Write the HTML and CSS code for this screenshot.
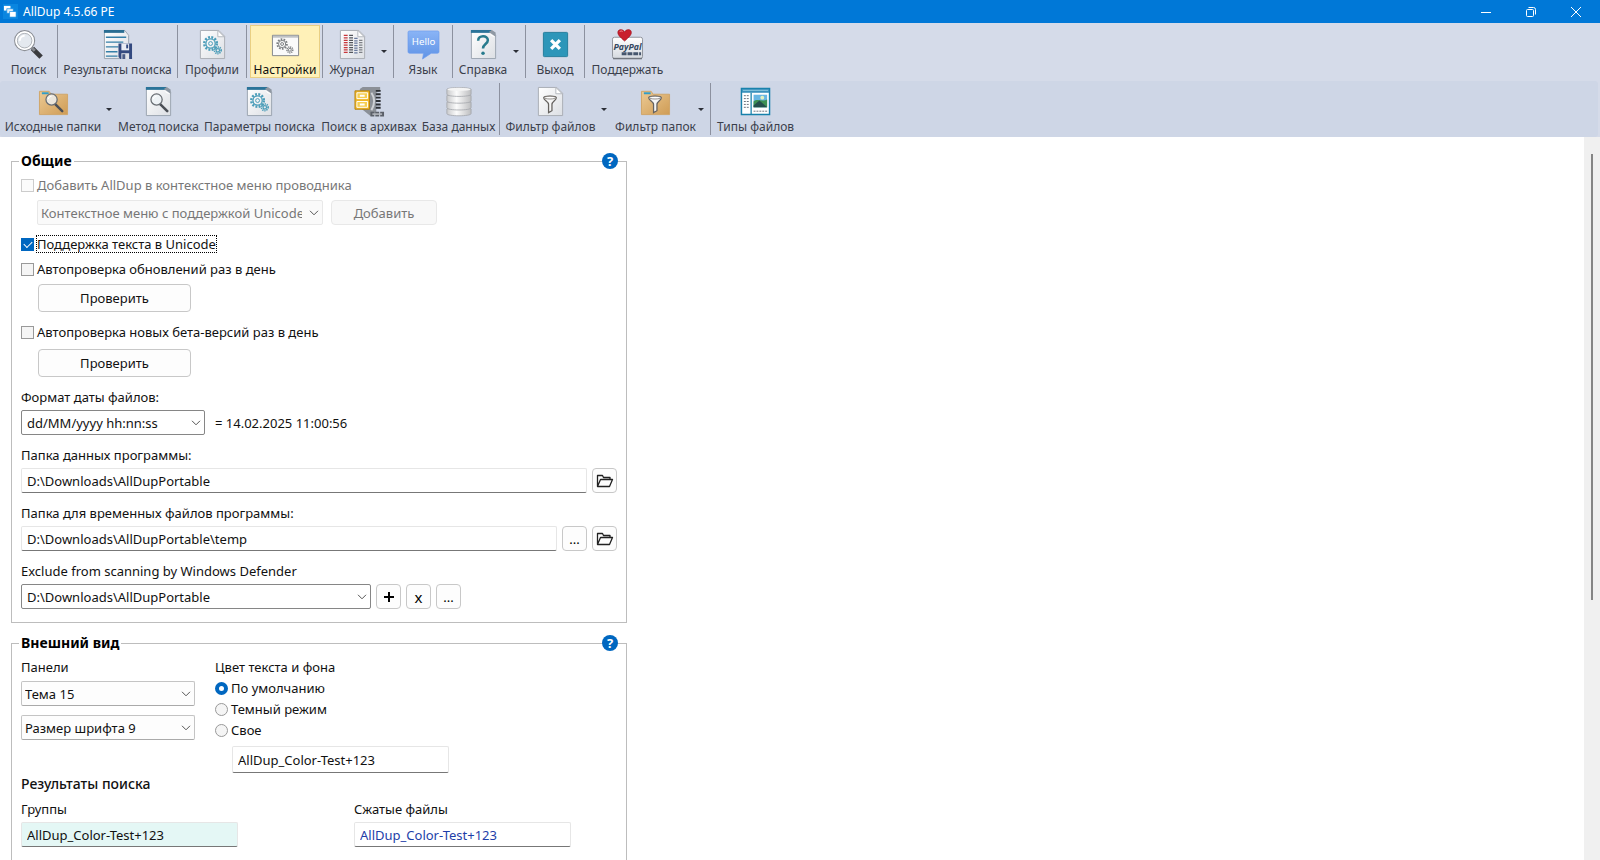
FILE: index.html
```html
<!DOCTYPE html>
<html lang="ru">
<head>
<meta charset="utf-8">
<title>AllDup 4.5.66 PE</title>
<link rel="stylesheet" href="styles.css">
</head>
<body>
<svg class="defs" aria-hidden="true">
  <defs>
    <linearGradient id="paper" x1="0" y1="0" x2="1" y2="1"><stop offset="0" stop-color="#ffffff"/><stop offset="1" stop-color="#dcdfe4"/></linearGradient>
    <linearGradient id="tan" x1="0" y1="0" x2="1" y2="1"><stop offset="0" stop-color="#ecca94"/><stop offset="1" stop-color="#cf9c55"/></linearGradient>
    <linearGradient id="bubble" x1="0" y1="0" x2="0" y2="1"><stop offset="0" stop-color="#8ab4f6"/><stop offset="1" stop-color="#5f93e6"/></linearGradient>
    <linearGradient id="disk" x1="0" y1="0" x2="1" y2="0"><stop offset="0" stop-color="#c9cacc"/><stop offset=".4" stop-color="#fbfbfb"/><stop offset="1" stop-color="#bdbec0"/></linearGradient>
    <linearGradient id="card" x1="0" y1="0" x2="0" y2="1"><stop offset="0" stop-color="#ffffff"/><stop offset="1" stop-color="#d5d9df"/></linearGradient>
    <symbol id="page" viewBox="0 0 32 32"><path d="M3.500 1.500h19l6 6v23h-25z" fill="url(#paper)" stroke="#a9adb5"/><path d="M21.500 1.500v6.500h6.500z" fill="#fff" stroke="#b4b8be"/></symbol>
    <symbol id="bluepage" viewBox="0 0 32 32"><path d="M3.500 1.500h21l4 5v24h-25z" fill="url(#paper)" stroke="#9ba4b0"/><path d="M3 1h21v3H3z" fill="#2a7399"/><path d="M21.500 3l7 5v-4.500l-4-2.500z" fill="#8f98a3"/><path d="M20 4c3 0 3 4 8 4l-7-4z" fill="#fff"/></symbol>
    <symbol id="gears" viewBox="0 0 32 32"><g fill="none"><circle cx="14" cy="15" r="6.500" stroke-width="2.500" stroke-dasharray="2 1.400"/><circle cx="14" cy="15" r="4.800" stroke-width="1.300"/><circle cx="14" cy="15" r="2" stroke-width="1"/><circle cx="21.500" cy="22" r="3.400" stroke-width="1.800" stroke-dasharray="1.300 .9"/><circle cx="21.500" cy="22" r="1.800" stroke-width="1.200"/></g></symbol>
    <symbol id="lens" viewBox="0 0 32 32"><path d="M18 19l7 7" stroke="#4b4f56" stroke-width="2.600" stroke-linecap="round"/><circle cx="14" cy="14" r="5.800" fill="#eef3f6" fill-opacity=".8" stroke="#676c72" stroke-width="1.300"/><path d="M10.500 13.500a4 4 0 0 1 3.500-3" stroke="#fff" fill="none"/></symbol>
    <symbol id="folder" viewBox="0 0 32 32"><path d="M1.500 5.500h10l2 3h17v21h-29z" fill="url(#tan)" stroke="#d0a568"/><path d="M4 6.500h7v2H4z" fill="#319dc8"/></symbol>
    <symbol id="funnel" viewBox="0 0 32 32"><path d="M9 12c0-2 13-2 13 0 0 3-4.500 4-4.500 7v6.500l-3.500 2V19c0-3-5-4-5-7z" fill="#f5f5f5" stroke="#65625f" stroke-width="1.300"/><ellipse cx="15.500" cy="12" rx="6" ry="1.400" fill="#fff" stroke="#77736f" stroke-width=".8"/></symbol>
    <symbol id="openfolder" viewBox="0 0 18 16"><path d="M1.500 13.500v-11h5l1 2h6.500v2M1.500 13.500l3-7h12l-3 7z" fill="none" stroke="#222" stroke-width="1.300" stroke-linejoin="round"/></symbol>
    <symbol id="chevron" viewBox="0 0 10 6"><path d="M1 .8l4 4 4-4" fill="none" stroke="currentColor" stroke-width="1"/></symbol>
  </defs>
</svg>

<header class="titlebar">
  <svg class="app-icon" viewBox="0 0 16 16"><path d="M0 0h16v16H0z" fill="#0a86e0"/><path d="M1 2h7v5H1z" fill="#fff"/><path d="M4 5h7v5H4z" fill="#dff0fc" stroke="#0a86e0" stroke-width=".7"/><path d="M7 8h7v6H7z" fill="#fff" stroke="#0a86e0" stroke-width=".7"/></svg>
  <h1 class="app-title">AllDup 4.5.66 PE</h1>
  <div class="window-buttons">
    <button class="window-button" aria-label="Свернуть"><svg viewBox="0 0 12 12"><path d="M1 6.500h10"/></svg></button>
    <button class="window-button" aria-label="Восстановить"><svg viewBox="0 0 12 12"><rect x="1.500" y="3.500" width="7" height="7" rx="1"/><path d="M3.500 1.500h5a2 2 0 0 1 2 2v5"/></svg></button>
    <button class="window-button" aria-label="Закрыть"><svg viewBox="0 0 12 12"><path d="M1 1l10 10M11 1L1 11"/></svg></button>
  </div>
</header>

<nav class="toolbars">
  <div class="toolbar">
    <div class="slot slot-search"><button class="tool"><svg viewBox="0 0 32 32"><path d="M20 20l9 9" stroke="#3a3b3e" stroke-width="5"/><path d="M18.500 18.500l4 4" stroke="#85888e" stroke-width="3"/><circle cx="12" cy="12" r="10.300" fill="#f1f4f8" stroke="#8d9096" stroke-width="1.200"/><circle cx="12" cy="12" r="8.800" fill="none" stroke="#fff" stroke-width="1.600"/><circle cx="12" cy="12" r="7.500" fill="#e4e9ef" stroke="#a0a4aa" stroke-width=".8"/><path d="M7 12a5 5 0 0 1 5-5" stroke="#fff" stroke-width="2" fill="none"/></svg><span>Поиск</span></button></div>
    <div class="slot slot-results"><button class="tool"><svg viewBox="0 0 32 32"><path d="M2.500 1.500h21l4 5v24h-25z" fill="url(#paper)" stroke="#9ba4b0"/><path d="M2 1h21v3H2z" fill="#2a6d92"/><path d="M4 8.500h21M4 13.500h18M4 18.500h13M4 23.500h12M4 28h12" stroke="#357fa8" stroke-width="1.400"/><path d="M17 15h14v16H19l-2-2z" fill="#33497f"/><path d="M20 15h8v7h-8z" fill="#e9edf4"/><path d="M25 16h2v4h-2z" fill="#33497f"/><path d="M20 25h8v6h-8z" fill="#dfe2e8"/><path d="M21 26h3v5h-3z" fill="#495b86"/></svg><span>Результаты поиска</span></button></div>
    <div class="slot slot-profiles"><button class="tool"><svg viewBox="0 0 32 32"><use href="#page"/><use href="#gears" stroke="#4b9db9"/></svg><span>Профили</span></button></div>
    <div class="slot slot-settings"><button class="tool tool-active" aria-pressed="true"><svg viewBox="0 0 32 32"><path d="M2.500 6.500h27v21h-27z" fill="#fafafa" stroke="#82868b"/><path d="M3 7h26v2H3z" fill="#bfc2c5"/><g fill="none" stroke="#7c7f82"><circle cx="12.500" cy="15.500" r="4.900" stroke-width="2" stroke-dasharray="1.700 1.300"/><circle cx="12.500" cy="15.500" r="3.700"/><circle cx="12.500" cy="15.500" r="1.500"/><circle cx="20.500" cy="21.500" r="3" stroke-width="1.600" stroke-dasharray="1.200 .8"/><circle cx="20.500" cy="21.500" r="1.500"/></g></svg><span>Настройки</span></button></div>
    <div class="slot slot-log"><button class="tool"><svg viewBox="0 0 32 32"><use href="#page"/><g fill="none" stroke-width="1.300"><path d="M9 6v20" stroke="#c8373b" stroke-width="4" stroke-dasharray="1.300 1.200"/><path d="M14.500 6v20" stroke="#53565c" stroke-width="4" stroke-dasharray="1.300 1.200"/><path d="M19.500 9v17" stroke="#69799c" stroke-width="3.500" stroke-dasharray="1.300 1.200"/><path d="M24.500 11v15" stroke="#7d8086" stroke-width="3.500" stroke-dasharray="1.300 1.200"/></g></svg><span>Журнал</span></button><button class="drop" aria-label="Журнал: меню"></button></div>
    <div class="slot slot-language"><button class="tool"><svg viewBox="0 0 32 32"><path d="M1.500 2h29q1.500 0 1.500 1.500v20q0 1.500-1.500 1.500H24l-9 6 1-6H1.500Q0 25 0 23.500v-20Q0 2 1.500 2z" fill="url(#bubble)" stroke="#6c9ced" stroke-width=".7"/><text x="16" y="16" class="hello">Hello</text></svg><span>Язык</span></button></div>
    <div class="slot slot-help"><button class="tool"><svg viewBox="0 0 32 32"><use href="#bluepage"/><path d="M10.500 12c0-6 10-6 10-.5 0 4-5 4-5 8.500" fill="none" stroke="#287b8d" stroke-width="2.600"/><circle cx="15.500" cy="25" r="1.800" fill="#287b8d"/></svg><span>Справка</span></button><button class="drop" aria-label="Справка: меню"></button></div>
    <div class="slot slot-exit"><button class="tool"><svg viewBox="0 0 32 32"><rect x="3.500" y="3.500" width="25" height="25" rx="1" fill="#2d96b9" stroke="#237d9b"/><path d="M11.500 11.500l9 9M20.500 11.500l-9 9" stroke="#fff" stroke-width="3.400"/></svg><span>Выход</span></button></div>
    <div class="slot slot-donate"><button class="tool"><svg viewBox="0 0 32 32"><rect x=".5" y="8.500" width="31" height="22" rx="2" fill="url(#card)" stroke="#8f949c"/><path d="M1 30.500h30" stroke="#72777f" stroke-width="1.500"/><path d="M10 25.500h20" stroke="#46566d" stroke-width="3" stroke-dasharray="5 1"/><text x="16" y="22" class="paypal">PayPal</text><path d="M13 12.500C8 8 6 6 6 3.500 6 0 11-.5 13 3c2-3.500 7-3 7 .5 0 2.500-2 4.500-7 9z" fill="#c91f2d" stroke="#98131e" stroke-width=".6"/><path d="M8 3c.5-1.200 2-1.200 3-.5" stroke="#f08a8f" fill="none"/></svg><span>Поддержать</span></button></div>
  </div>
  <div class="toolbar toolbar-second">
    <div class="slot slot-source"><button class="tool"><svg viewBox="0 0 32 32"><use href="#folder"/><use href="#lens"/></svg><span>Исходные папки</span></button><button class="drop" aria-label="Исходные папки: меню"></button></div>
    <div class="slot slot-method"><button class="tool"><svg viewBox="0 0 32 32"><use href="#bluepage"/><use href="#lens"/></svg><span>Метод поиска</span></button></div>
    <div class="slot slot-params"><button class="tool"><svg viewBox="0 0 32 32"><use href="#bluepage"/><use href="#gears" stroke="#4b9db9"/></svg><span>Параметры поиска</span></button></div>
    <div class="slot slot-archives"><button class="tool"><svg viewBox="0 0 32 32"><path d="M6 3l3-2h18v4l-4 2v22l-6 2-10-8z" fill="#8b9097"/><path d="M1 5h15v19H1z" fill="#efb728" stroke="#b8830f"/><path d="M3 7h11v6H3zM3 16h11v6H3z" fill="#f6ce4f" stroke="#fff"/><path d="M6 10h5M6 19h5" stroke="#fff" stroke-width="2"/><path d="M25 4v21" stroke="#2d3136" stroke-width="5" stroke-dasharray="2 1.500"/><path d="M18 7c4 6 4 11 0 18" fill="none" stroke="#ced1d5" stroke-width="2"/><path d="M17 29h14" stroke="#5b6069" stroke-width="5" stroke-dasharray="4 1"/><path d="M19 29h10" stroke="#b9bdc3" stroke-width="1.500"/></svg><span>Поиск в архивах</span></button></div>
    <div class="slot slot-database"><button class="tool"><svg viewBox="0 0 32 32"><g fill="url(#disk)" stroke="#a2a5a9" stroke-width=".8"><path d="M4 24c0-2 25-2 25 0v4.500c0 3-25 3-25 0z"/><path d="M4 17c0-2 25-2 25 0v5.500c0 3-25 3-25 0z"/><path d="M4 10c0-2 25-2 25 0v5.500c0 3-25 3-25 0z"/><path d="M4 3.500C4 1 29 1 29 3.500v5c0 3-25 3-25 0z"/></g><ellipse cx="16.500" cy="3.500" rx="12" ry="1.600" fill="#f4f4f4"/></svg><span>База данных</span></button></div>
    <div class="slot slot-filefilter"><button class="tool"><svg viewBox="0 0 32 32"><use href="#page"/><use href="#funnel"/></svg><span>Фильтр файлов</span></button><button class="drop" aria-label="Фильтр файлов: меню"></button></div>
    <div class="slot slot-folderfilter"><button class="tool"><svg viewBox="0 0 32 32"><use href="#folder"/><use href="#funnel"/></svg><span>Фильтр папок</span></button><button class="drop" aria-label="Фильтр папок: меню"></button></div>
    <div class="slot slot-types"><button class="tool"><svg viewBox="0 0 32 32"><path d="M1.500 2.500h29v27h-29z" fill="#fff" stroke="#1781ab" stroke-width="1.500"/><path d="M2 3h28v4H2z" fill="#3b91bc"/><path d="M3 4.500h26" stroke="#8cc8df"/><path d="M11.500 7v22" stroke="#1781ab" stroke-width="1.300"/><path d="M4 10h6M4 13h6M4 16h6M4 19h6M4 22h6M14 26h14" stroke="#68707a" stroke-dasharray="2 1"/><path d="M14 9h14v13H14z" fill="#68b7e3"/><path d="M14 16c4-4 9 1 14-2v8H14z" fill="#3d9153"/><path d="M14 20l6-5 8 7H14z" fill="#234f4c"/><circle cx="23" cy="12" r="2" fill="#e3f0c0"/></svg><span>Типы файлов</span></button></div>
  </div>
</nav>

<div class="workspace">
  <main class="settings">
    <fieldset class="group">
      <legend>Общие</legend>
      <button class="help" aria-label="Справка: общие">?</button>
      <div class="check-row muted"><input type="checkbox" id="ctx" disabled><label for="ctx">Добавить AllDup в контекстное меню проводника</label></div>
      <div class="context-row">
        <div class="combo combo-muted combo-context"><select disabled aria-label="Контекстное меню"><option>Контекстное меню с поддержкой Unicode</option></select><svg><use href="#chevron"/></svg></div>
        <button class="button button-add" disabled>Добавить</button>
      </div>
      <div class="check-row"><input type="checkbox" id="uni" checked><label for="uni" class="focused">Поддержка текста в Unicode</label></div>
      <div class="check-row check-update"><input type="checkbox" id="upd"><label for="upd">Автопроверка обновлений раз в день</label></div>
      <button class="button button-check">Проверить</button>
      <div class="check-row check-beta"><input type="checkbox" id="beta"><label for="beta">Автопроверка новых бета-версий раз в день</label></div>
      <button class="button button-check">Проверить</button>

      <label class="caption caption-date" for="date">Формат даты файлов:</label>
      <div class="row">
        <div class="combo combo-strong combo-date"><select id="date"><option>dd/MM/yyyy hh:nn:ss</option></select><svg><use href="#chevron"/></svg></div>
        <output class="date-sample" for="date">= 14.02.2025 11:00:56</output>
      </div>
      <label class="caption" for="data">Папка данных программы:</label>
      <div class="row"><input class="text" id="data" value="D:\Downloads\AllDupPortable"><button class="button square" aria-label="Открыть папку"><svg><use href="#openfolder"/></svg></button></div>
      <label class="caption" for="temp">Папка для временных файлов программы:</label>
      <div class="row"><input class="text" id="temp" value="D:\Downloads\AllDupPortable\temp"><button class="button square">...</button><button class="button square" aria-label="Открыть папку"><svg><use href="#openfolder"/></svg></button></div>
      <label class="caption" for="excl">Exclude from scanning by Windows Defender</label>
      <div class="row">
        <div class="combo combo-strong combo-exclude"><select id="excl"><option>D:\Downloads\AllDupPortable</option></select><svg><use href="#chevron"/></svg></div>
        <button class="button square" aria-label="Добавить"><svg viewBox="0 0 18 16"><path d="M9 3v10M4 8h10" stroke="#000" stroke-width="2"/></svg></button><button class="button square square-x">x</button><button class="button square">...</button>
      </div>
    </fieldset>

    <fieldset class="group group-look">
      <legend>Внешний вид</legend>
      <button class="help" aria-label="Справка: внешний вид">?</button>
      <div class="look">
        <div class="panels">
          <label for="theme">Панели</label>
          <div class="combo"><select id="theme"><option>Тема 15</option></select><svg><use href="#chevron"/></svg></div>
          <div class="combo"><select aria-label="Размер шрифта"><option>Размер шрифта 9</option></select><svg><use href="#chevron"/></svg></div>
        </div>
        <div class="colors" role="radiogroup" aria-labelledby="colors-title">
          <span id="colors-title">Цвет текста и фона</span>
          <div class="check-row radio-first"><input type="radio" name="mode" id="m1" checked><label for="m1">По умолчанию</label></div>
          <div class="check-row"><input type="radio" name="mode" id="m2"><label for="m2">Темный режим</label></div>
          <div class="check-row"><input type="radio" name="mode" id="m3"><label for="m3">Свое</label></div>
          <input class="text sample sample-own" aria-label="Свое: образец" value="AllDup_Color-Test+123">
        </div>
      </div>
      <h2 class="subtitle">Результаты поиска</h2>
      <div class="samples">
        <div><label for="groups">Группы</label><input class="text sample sample-group" id="groups" value="AllDup_Color-Test+123"></div>
        <div><label for="packed">Сжатые файлы</label><input class="text sample sample-packed" id="packed" value="AllDup_Color-Test+123"></div>
      </div>
    </fieldset>
  </main>
  <div class="scrollbar"><div class="thumb"></div></div>
</div>
</body>
</html>
```
FILE: styles.css
```css
* { box-sizing: border-box; }
body {
  margin: 0;
  height: 100vh;
  overflow: hidden;
  display: flex;
  flex-direction: column;
  background: #fff;
  color: #111;
  font: 13px/18px "Noto Sans", "Open Sans", sans-serif;
}
button, input, select { font: inherit; color: inherit; margin: 0; }
button { padding: 0; border: 0; background: none; }
.defs { position: absolute; width: 0; height: 0; }

.titlebar {
  flex: none;
  display: flex;
  align-items: center;
  height: 23px;
  padding-left: 3px;
  background: #0078d7;
  color: #fff;
}
.app-icon { width: 15px; height: 15px; }
.app-title { margin: 0 auto 0 5px; font-size: 12px; font-weight: 400; }
.window-buttons { display: flex; height: 20px; padding-right: 2px; }
.window-button { display: flex; align-items: center; justify-content: center; width: 45px; }
.window-button svg { width: 12px; height: 12px; fill: none; stroke: #fff; }

.toolbars { flex: none; background: #d5dbe9; color: #3b3f4b; font-size: 12px; }
.toolbar { display: flex; height: 58px; padding: 2px 0 3px; }
.toolbar-second { height: 56px; margin: 0 2px 0 0; padding: 2px 0; background: #ced6e6; border-radius: 3px; }
.slot { display: flex; white-space: nowrap; }
.toolbar:first-child .slot + .slot, .slot-filefilter, .slot-types { border-left: 1px solid #8c919f; }
.tool { flex: 1; min-width: 0; display: flex; flex-direction: column; align-items: center; gap: 1px; padding-top: 4px; }
.toolbar-second .tool { padding-top: 3px; }
.tool svg { flex: none; width: 31px; height: 31px; overflow: visible; }
.tool span { line-height: 18px; }
.tool-active { margin: 0 2px 0 3px; background: #fff1b8; border: 1px solid #e9cf83; padding-top: 3px; color: #111; }
.drop { width: 12px; display: flex; align-items: center; }
.drop::before { content: ""; border: 3px solid transparent; border-top-color: #2b2e36; border-bottom: 0; }
.hello { font: 10px "Noto Sans", sans-serif; fill: #fff; text-anchor: middle; }
.paypal { font: italic bold 9px "Open Sans", sans-serif; fill: #33475e; text-anchor: middle; }
.slot-search { width: 57px; }
.slot-results { width: 120px; }
.slot-profiles { width: 69px; }
.slot-settings { width: 76px; }
.slot-log { width: 71px; }
.slot-language { width: 59px; }
.slot-help { width: 73px; }
.slot-exit { width: 59px; }
.slot-donate { width: 86px; }
.slot-source { width: 118px; }
.slot-method { width: 81px; }
.slot-params { width: 121px; }
.slot-archives { width: 98px; }
.slot-database { width: 81px; }
.slot-filefilter { width: 114px; }
.slot-folderfilter { width: 97px; }
.slot-types { width: 90px; }

.workspace { flex: 1; min-height: 0; display: flex; justify-content: space-between; }
.settings { width: 638px; padding: 13px 11px 0; }
.scrollbar { width: 16px; padding: 17px 7px 0; background: #f0f0f0; }
.thumb { width: 2px; height: 446px; background: #858585; }

.group {
  position: relative;
  display: flow-root;
  margin: 0 0 9px;
  padding: 4px 9px 13px;
  border: 1px solid #bdbdbd;
}
.group legend { margin-left: -2px; padding: 0 2px; font-size: 14px; line-height: 22px; font-weight: 700; color: #000; }
.help {
  position: absolute;
  top: -19px;
  right: 8px;
  width: 16px;
  height: 16px;
  border-radius: 50%;
  background: #0067c0;
  color: #fff;
  font-weight: 700;
  line-height: 16px;
  text-align: center;
}

.check-row { display: flex; align-items: center; gap: 3px; height: 18px; }
.check-row input { flex: none; appearance: none; position: relative; width: 13px; height: 13px; background: #f5f5f5; border: 1px solid #999; }
.check-row input[type="radio"] { border-radius: 50%; }
.check-row input[type="checkbox"]:checked { background: #0067c0; border-color: #0067c0; }
.check-row input[type="checkbox"]:checked::after {
  content: "";
  position: absolute;
  left: 2px;
  top: 2px;
  width: 7px;
  height: 4px;
  border: solid #fff;
  border-width: 0 0 1px 1px;
  transform: rotate(-45deg);
}
.check-row input[type="radio"]:checked { background: #fff; border: 4px solid #0067c0; }
.muted { color: #777; }
.check-row input:disabled { border-color: #ccc; background: #fbfbfb; }
.focused { outline: 1px dotted #000; line-height: 16px; }

.row, .context-row { display: flex; align-items: center; gap: 5px; }
.context-row { gap: 8px; margin: 6px 0 10px 16px; }
.combo { position: relative; height: 25px; }
.combo select {
  appearance: none;
  width: 100%;
  height: 100%;
  padding: 0 20px 0 3px;
  background: #fdfdfd;
  border: 1px solid #c4c4c4;
  border-bottom-color: #aaa;
  border-radius: 2px;
}
.combo-strong select { background: #fff; border-color: #868686; padding-left: 5px; }
.combo-muted { color: #777; }
.combo-muted select { border-color: #e8e8e8; background: #fafafa; opacity: 1; }
.combo svg { position: absolute; right: 4px; top: 10px; width: 10px; height: 6px; pointer-events: none; color: #555; }
.combo-context { width: 286px; }
.combo-date { width: 184px; }
.combo-exclude { width: 350px; }
.button { height: 25px; background: #fdfdfd; border: 1px solid #c8c8c8; border-radius: 4px; }
.button:disabled { color: #777; background: #f8f8f8; border-color: #e8e8e8; }
.button-add { width: 106px; }
.button-check { display: block; width: 153px; height: 28px; margin-left: 17px; }
.check-update { margin-top: 7px; margin-bottom: 6px; }
.check-beta { margin-top: 11px; margin-bottom: 8px; }
.square { flex: none; display: flex; align-items: center; justify-content: center; width: 25px; color: #000; }
.square svg { width: 18px; height: 16px; }
.square-x { font-size: 15px; }
.caption { display: block; margin: 11px 0 4px; }
.date-sample { margin-left: 5px; }
.text {
  flex: 1;
  min-width: 0;
  height: 25px;
  padding: 0 5px;
  background: #fff;
  border: 1px solid #e6e6e6;
  border-bottom-color: #777;
  border-radius: 2px;
}

.look { display: flex; gap: 20px; }
.panels { width: 174px; display: flex; flex-direction: column; gap: 9px; }
.panels label { margin-bottom: -4px; }
.colors { display: flex; flex-direction: column; gap: 3px; }
.sample { flex: none; display: block; width: 217px; }
.sample-own { height: 27px; margin: 4px 0 0 17px; }
.subtitle { margin: 1px 0 6px; font-size: 14px; line-height: 20px; font-weight: 500; }
.samples { display: flex; gap: 116px; }
.samples label { display: block; margin-bottom: 4px; }
.sample-group { background: #e4f7f5; }
.sample-packed { color: #1e3ea8; }
```
